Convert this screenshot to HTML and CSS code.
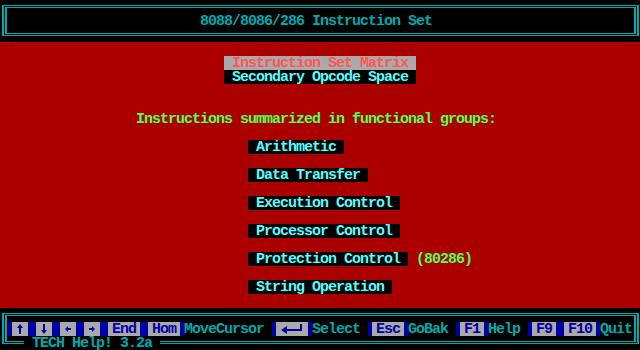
FILE: index.html
```html
<!DOCTYPE html>
<html>
    <head>
        <link rel="stylesheet" href="styles.css">
    </head>

    <body>
        <div class="screen">
            <header class="top">
                <div class="frame">
                    <div class="frame-in">
                        <h1 class="title">8088/8086/286 Instruction Set</h1>
                    </div>
                </div>
            </header>

            <main class="page">
                <ul class="matrix">
                    <li class="pick current">Instruction Set Matrix</li>
                    <li class="pick">Secondary Opcode Space</li>
                </ul>

                <p class="lead">Instructions summarized in functional groups:</p>

                <ul class="groups">
                    <li><span class="pick">Arithmetic</span></li>
                    <li><span class="pick">Data Transfer</span></li>
                    <li><span class="pick">Execution Control</span></li>
                    <li><span class="pick">Processor Control</span></li>
                    <li><span class="pick">Protection Control</span><span class="note">(80286)</span></li>
                    <li><span class="pick">String Operation</span></li>
                </ul>
            </main>

            <footer class="bottom">
                <div class="frame">
                    <div class="frame-in">
                        <div class="keys">
                            <span class="key k1" title="Up">
                                <svg width="8" height="14" viewBox="0 0 8 14">
                                    <polygon points="4,2 7,6 5,6 5,12 3,12 3,6 1,6" fill="#0000aa"/>
                                </svg>
                            </span>
                            <span class="key k1" title="Down">
                                <svg width="8" height="14" viewBox="0 0 8 14">
                                    <polygon points="4,12 7,8 5,8 5,2 3,2 3,8 1,8" fill="#0000aa"/>
                                </svg>
                            </span>
                            <span class="key k1" title="Left">
                                <svg width="8" height="14" viewBox="0 0 8 14">
                                    <polygon points="1,7 4,4 4,6 7,6 7,8 4,8 4,10" fill="#0000aa"/>
                                </svg>
                            </span>
                            <span class="key k1" title="Right">
                                <svg width="8" height="14" viewBox="0 0 8 14">
                                    <polygon points="7,7 4,4 4,6 1,6 1,8 4,8 4,10" fill="#0000aa"/>
                                </svg>
                            </span>
                            <span class="key k3">End</span>
                            <span class="key k3">Hom</span>
                            <span class="label">MoveCursor</span>
                            <span class="key k3 gap" title="Enter">
                                <svg width="24" height="14" viewBox="0 0 24 14">
                                    <polygon points="1,8 7,4 7,12" fill="#0000aa"/>
                                    <rect x="7" y="7" width="15" height="2" fill="#0000aa"/>
                                    <rect x="20" y="2" width="2" height="7" fill="#0000aa"/>
                                </svg>
                            </span>
                            <span class="label">Select</span>
                            <span class="key k3 gap">Esc</span>
                            <span class="label">GoBak</span>
                            <span class="key k2 gap">F1</span>
                            <span class="label">Help</span>
                            <span class="key k2 gap">F9</span>
                            <span class="key k3">F10</span>
                            <span class="label">Quit</span>
                        </div>
                    </div>
                </div>
                <div class="legend">TECH Help! 3.2a</div>
            </footer>
        </div>
    </body>
</html>
```

FILE: styles.css
```css
body {
    margin: 0;
    padding: 0;
    background-color: #000;
    font-family: "Liberation Mono", "DejaVu Sans Mono", monospace;
    font-weight: bold;
    font-size: 15px;
    letter-spacing: -1px;
    line-height: 16px;
}

.screen {
    width: 640px;
    height: 350px;
    display: flex;
    flex-direction: column;
}

ul {
    list-style: none;
    margin: 0;
    padding: 0;
}

/* double line boxes, top and bottom */
.top,
.bottom {
    height: 42px;
    box-sizing: border-box;
    padding: 5px 1px 0 2px;
    background-color: #000;
}

.bottom {
    position: relative;
}

.frame {
    height: 31px;
    box-sizing: border-box;
    border: solid #00aaaa;
    border-width: 1px 2px;
    padding: 1px;
}

.frame-in {
    height: 100%;
    box-sizing: border-box;
    border: solid #00aaaa;
    border-width: 1px 2px;
    padding-top: 6px;
}

.title {
    margin: 0;
    height: 14px;
    padding-left: 193px;
    font-size: 15px;
    color: #00aaaa;
}

/* red page */
.page {
    flex: 1;
    background-color: #aa0000;
    padding-top: 14px;
}

.matrix {
    margin-left: 224px;
}

.pick {
    display: block;
    width: fit-content;
    height: 14px;
    padding: 0 8px;
    background-color: #000;
    color: #55ffff;
}

.pick.current {
    background-color: #aaaaaa;
    color: #ff5555;
}

.lead {
    height: 14px;
    margin: 28px 0 0 136px;
    color: #55ff55;
}

.groups {
    margin: 14px 0 0 248px;
}

.groups li {
    display: flex;
    height: 14px;
    margin-bottom: 14px;
}

.note {
    margin-left: 8px;
    color: #55ff55;
}

/* key bar */
.keys {
    display: flex;
    padding-left: 1px;
    height: 14px;
}

.key {
    display: flex;
    justify-content: center;
    box-sizing: border-box;
    height: 14px;
    background-color: #aaaaaa;
    color: #0000aa;
    border-left: 4px solid #0000aa;
    border-right: 4px solid #0000aa;
}

.key svg {
    display: block;
}

.k1 { width: 24px; }
.k2 { width: 32px; }
.k3 { width: 40px; }

.gap {
    margin-left: 8px;
}

.label {
    height: 14px;
    color: #00aaaa;
}

.legend {
    position: absolute;
    left: 24px;
    top: 28px;
    height: 14px;
    padding: 0 8px;
    background-color: #000;
    color: #00aaaa;
}
```
